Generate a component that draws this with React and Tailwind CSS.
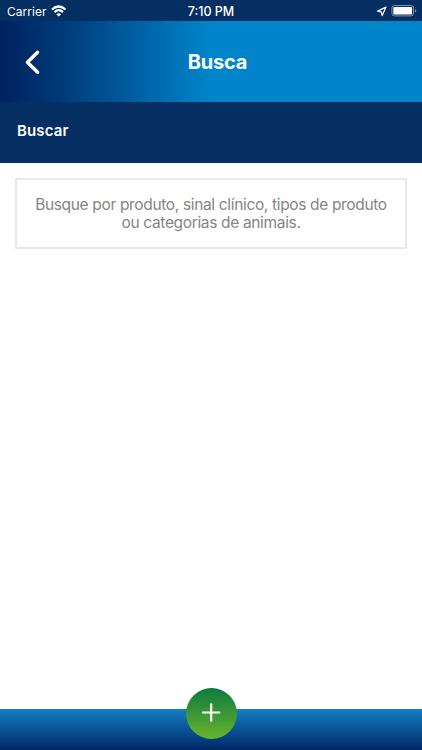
function StatusBar() {
  return (
    <div className="grid h-[21px] shrink-0 grid-cols-3 items-center bg-[#052e62] text-[12.5px] leading-[21px]">
      <div className="flex items-center gap-[5px] pl-[7px]">
        <span className="w-[39px] pt-px text-[12px] tracking-[0.05px]">Carrier</span>
        <svg width="16" height="12" viewBox="0 0 16 12" fill="none" stroke="white" strokeWidth="2.2">
          <path d="M0.9 4.5Q7.7 -1.5 14.5 4.5" />
          <path d="M3.4 7.1Q7.7 3.3 12 7.1" />
          <path d="M7.7 11.6L5.3 9.2Q7.7 7.2 10.1 9.2Z" fill="white" stroke="none" />
        </svg>
      </div>
      <span className="pt-px text-center font-medium">7:10 PM</span>
      <div className="flex items-center justify-end gap-[4px] pr-[5px]">
        <svg width="11" height="11" viewBox="0 0 11 11" fill="none" stroke="white" strokeWidth="1.2" strokeLinejoin="round">
          <path d="M10 1.1L1.6 5.1L5.2 5.9L6.2 9.6Z" />
        </svg>
        <svg width="26" height="12" viewBox="0 0 26 12">
          <rect x="0.9" y="0.5" width="21.6" height="10.4" rx="2.6" fill="none" stroke="#8295ae" />
          <rect x="2.3" y="1.9" width="18.8" height="7.6" rx="1.2" fill="white" />
          <path d="M24 4Q25.4 4.8 25.4 5.8T24 7.6Z" fill="#8295ae" />
        </svg>
      </div>
    </div>
  );
}

export default function App() {
  return (
    <div className="flex h-[750px] w-[422px] flex-col overflow-hidden bg-white font-['Inter','Liberation_Sans',sans-serif] text-white">
      <StatusBar />
      <header className="grid h-[81px] shrink-0 grid-cols-[64px_1fr_52px] items-center bg-[linear-gradient(90deg,#00205f_0%,#003d7b_16%,#0061a5_33%,#0085ca_50%)]">
        <button className="pl-[24px]" aria-label="Voltar">
          <svg width="17" height="26" viewBox="0 0 17 26" fill="none" stroke="white" strokeWidth="3.4" strokeLinecap="round" strokeLinejoin="round">
            <path d="M13.6 3.2L3.4 13.2L13.6 23.2" />
          </svg>
        </button>
        <h1 className="pl-[1px] text-center text-[20px] leading-[24px] font-bold tracking-[-0.2px]">Busca</h1>
      </header>
      <div className="flex h-[61px] shrink-0 items-center bg-[#052e62] pb-[4px] pl-[17px]">
        <h2 className="text-[15px] leading-[20px] font-semibold tracking-[0.15px]">Buscar</h2>
      </div>
      <main className="flex-1 px-[15px] pt-[15px]">
        <div className="flex h-[71px] justify-center rounded-[1px] border-2 border-[#e6e8eb] pt-[16px]">
          <p className="text-center text-[15.5px] leading-[18px] tracking-[-0.34px] whitespace-nowrap text-[#858585]">
            Busque por produto, sinal clínico, tipos de produto
            <br />
            ou categorias de animais.
          </p>
        </div>
      </main>
      <footer className="flex h-[41px] shrink-0 justify-center bg-[linear-gradient(180deg,#147fc3_0%,#002766_100%)]">
        <button className="-mt-[21px] flex size-[51px] items-center justify-center rounded-full bg-[linear-gradient(180deg,#0d7a40_0%,#69b42d_100%)] pb-[2px]" aria-label="Adicionar">
          <svg width="19" height="19" viewBox="0 0 19 19" fill="none" stroke="white" strokeWidth="2.2">
            <path d="M9.2 0.5V18.5M0.2 9.5H18.2" />
          </svg>
        </button>
      </footer>
    </div>
  );
}
